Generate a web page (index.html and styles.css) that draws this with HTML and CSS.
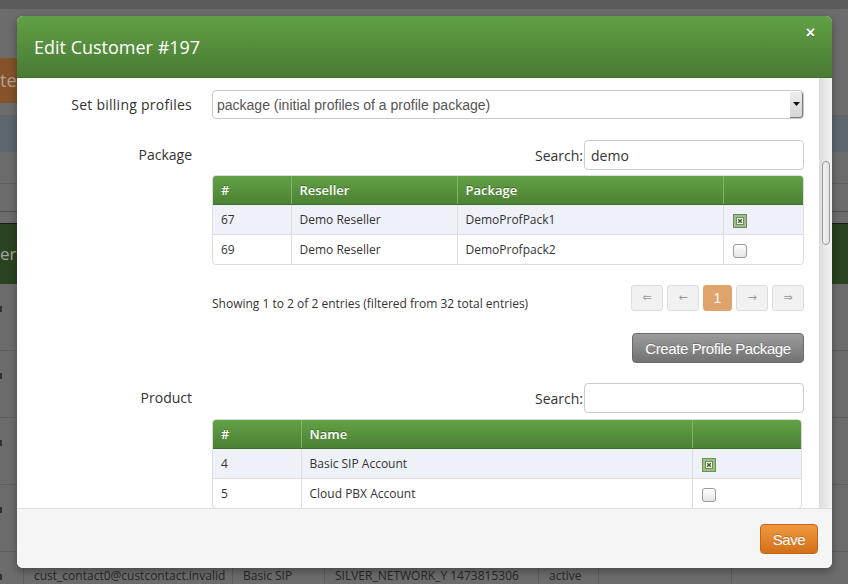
FILE: index.html
```html
<!DOCTYPE html>
<html lang="en">
<head>
    <meta charset="UTF-8">
    <meta name="viewport" content="width=device-width, initial-scale=1.0">
    <title>Edit Customer #197</title>
    <link rel="stylesheet" href="styles.css">
</head>
<body>
    <!-- page behind the backdrop -->
    <div class="page">
        <div class="page-top"></div>
        <div class="page-tools">
            <div class="page-btn">te</div>
        </div>
        <div class="page-strip"></div>
        <div class="page-line"></div>
        <div class="page-line dark"></div>
        <div class="page-thead">er</div>
        <div class="page-row"><span class="mark"></span></div>
        <div class="page-row"><span class="mark"></span></div>
        <div class="page-row"><span class="mark"></span></div>
        <div class="page-row"><span class="mark"></span></div>
        <div class="page-row">
            <div class="page-cell c0"><span class="mark"></span></div>
            <div class="page-cell c1">cust_contact0@custcontact.invalid</div>
            <div class="page-cell c2">Basic SIP</div>
            <div class="page-cell c3">SILVER_NETWORK_Y 1473815306</div>
            <div class="page-cell c4">active</div>
            <div class="page-cell c5"></div>
            <div class="page-cell c6"></div>
        </div>
    </div>

    <div class="modal">
        <div class="modal-header">
            <h3 class="modal-title">Edit Customer #197</h3>
            <span class="close">&times;</span>
        </div>

        <div class="modal-body">
            <div class="body-content">
                <div class="form-row">
                    <label class="form-label line-29 wide">Set billing profiles</label>
                    <div class="form-control">
                        <div class="select-box">
                            <span class="select-text">package (initial profiles of a profile package)</span>
                            <span class="select-arrow">
                                <svg width="7" height="4" viewBox="0 0 7 4"><path d="M0 0h7L3.5 4z" fill="#111"/></svg>
                            </span>
                        </div>
                    </div>
                </div>

                <div class="form-row group-gap">
                    <label class="form-label line-30">Package</label>
                    <div class="form-control">
                        <div class="search-line">
                            <span class="search-label">Search:</span>
                            <input class="search-input" type="text" value="demo">
                        </div>
                        <div class="table-wrap">
                            <table class="data-table">
                                <colgroup>
                                    <col style="width: 78px">
                                    <col style="width: 166px">
                                    <col style="width: 266px">
                                    <col>
                                </colgroup>
                                <thead>
                                    <tr><th>#</th><th>Reseller</th><th>Package</th><th></th></tr>
                                </thead>
                                <tbody>
                                    <tr class="odd">
                                        <td>67</td><td>Demo Reseller</td><td>DemoProfPack1</td>
                                        <td class="check-cell">
                                            <svg class="check" width="14" height="14" viewBox="0 0 14 14"><rect x="0.5" y="0.5" width="13" height="13" fill="#9cbf85" stroke="#222" stroke-dasharray="1 1"/><rect x="3.5" y="3.5" width="7" height="7" fill="#eef4ea" stroke="#6c8f58"/><path d="M5.2 5.2l3.6 3.6M8.8 5.2l-3.6 3.6" stroke="#3f5f30" stroke-width="1.4"/></svg>
                                        </td>
                                    </tr>
                                    <tr>
                                        <td>69</td><td>Demo Reseller</td><td>DemoProfpack2</td>
                                        <td class="check-cell">
                                            <svg class="check" width="14" height="14" viewBox="0 0 14 14"><defs><linearGradient id="cb1" x1="0" y1="0" x2="0" y2="1"><stop offset="0" stop-color="#fff"/><stop offset="1" stop-color="#e4e4e4"/></linearGradient></defs><rect x="0.5" y="0.5" width="13" height="13" rx="2.5" fill="url(#cb1)" stroke="#9a9a9a"/></svg>
                                        </td>
                                    </tr>
                                </tbody>
                            </table>
                        </div>
                        <div class="table-footer">
                            <div class="table-info">Showing 1 to 2 of 2 entries (filtered from 32 total entries)</div>
                            <div class="pager">
                                <span class="page-link">&lArr;</span>
                                <span class="page-link">&larr;</span>
                                <span class="page-link active">1</span>
                                <span class="page-link">&rarr;</span>
                                <span class="page-link">&rArr;</span>
                            </div>
                        </div>
                        <div class="button-line">
                            <button class="btn btn-gray">Create Profile Package</button>
                        </div>
                    </div>
                </div>

                <div class="form-row group-gap">
                    <label class="form-label line-30">Product</label>
                    <div class="form-control">
                        <div class="search-line">
                            <span class="search-label">Search:</span>
                            <input class="search-input" type="text" value="">
                        </div>
                        <div class="table-wrap narrow">
                            <table class="data-table">
                                <colgroup>
                                    <col style="width: 88px">
                                    <col style="width: 391px">
                                    <col>
                                </colgroup>
                                <thead>
                                    <tr><th>#</th><th>Name</th><th></th></tr>
                                </thead>
                                <tbody>
                                    <tr class="odd">
                                        <td>4</td><td>Basic SIP Account</td>
                                        <td class="check-cell">
                                            <svg class="check" width="14" height="14" viewBox="0 0 14 14"><rect x="0.5" y="0.5" width="13" height="13" fill="#9cbf85" stroke="#6c8f58"/><rect x="3.5" y="3.5" width="7" height="7" fill="#eef4ea" stroke="#6c8f58"/><path d="M5.2 5.2l3.6 3.6M8.8 5.2l-3.6 3.6" stroke="#3f5f30" stroke-width="1.4"/></svg>
                                        </td>
                                    </tr>
                                    <tr>
                                        <td>5</td><td>Cloud PBX Account</td>
                                        <td class="check-cell">
                                            <svg class="check" width="14" height="14" viewBox="0 0 14 14"><defs><linearGradient id="cb2" x1="0" y1="0" x2="0" y2="1"><stop offset="0" stop-color="#fff"/><stop offset="1" stop-color="#e4e4e4"/></linearGradient></defs><rect x="0.5" y="0.5" width="13" height="13" rx="2.5" fill="url(#cb2)" stroke="#9a9a9a"/></svg>
                                        </td>
                                    </tr>
                                </tbody>
                            </table>
                        </div>
                    </div>
                </div>
            </div>

            <div class="scrollbar">
                <div class="scroll-thumb"></div>
            </div>
        </div>

        <div class="modal-footer">
            <button class="btn btn-save">Save</button>
        </div>
    </div>
</body>
</html>
```

FILE: styles.css
```css
* {
    box-sizing: border-box;
}

body {
    margin: 0;
    width: 848px;
    height: 584px;
    overflow: hidden;
    position: relative;
    background: #6c6c6c;
    font-family: "Open Sans", "Liberation Sans", sans-serif;
    color: #333;
}

/* background page (already dimmed by the backdrop) */
.page {
    height: 584px;
    overflow: hidden;
}

.page-top {
    height: 9px;
    background: #5a5a5a;
}

.page-tools {
    height: 106px;
    padding-top: 49px;
}

.page-btn {
    width: 17px;
    height: 45px;
    background: #85522a;
    color: #b3a08f;
    font-size: 18px;
    line-height: 45px;
    overflow: hidden;
    white-space: nowrap;
}

.page-strip {
    height: 37px;
    background: #5c676e;
}

.page-line {
    height: 32px;
    border-bottom: 1px solid #5e5e5e;
}

.page-line.dark {
    height: 28px;
    border-bottom-color: #4d4d4d;
    margin-bottom: 11px;
}

.page-thead {
    height: 61px;
    background: #2b431f;
    border-top: 1px solid #1c1c1c;
    color: #a3ab9c;
    font-size: 17px;
    line-height: 60px;
}

.page-row {
    height: 67px;
    border-bottom: 1px solid #5f5f5f;
    display: flex;
    font-size: 12px;
    color: #262626;
    line-height: 18px;
}

.mark {
    display: block;
    width: 2px;
    height: 6px;
    margin-top: 22px;
    background: #303030;
}

.page-cell {
    height: 67px;
    padding: 15px 0 0 10px;
    border-left: 1px solid #5e5e5e;
    white-space: nowrap;
}

.page-cell.c0 { width: 23px; border-left: none; padding: 0; }
.page-cell.c1 { width: 209px; }
.page-cell.c2 { width: 92px; }
.page-cell.c3 { width: 214px; }
.page-cell.c4 { width: 60px; }
.page-cell.c5 { width: 133px; }
.page-cell.c6 { flex: 1; }

/* modal */
.modal {
    position: absolute;
    left: 17px;
    top: 16px;
    width: 815px;
    height: 552px;
    background: #fff;
    border-radius: 6px;
    box-shadow: 0 3px 9px rgba(0, 0, 0, 0.35);
    display: flex;
    flex-direction: column;
    overflow: hidden;
}

.modal-header {
    height: 62px;
    padding: 0 17px;
    display: flex;
    justify-content: space-between;
    align-items: flex-start;
    background: linear-gradient(to bottom, #60a045, #4a7a34);
    border-bottom: 1px solid #3f6a2c;
}

.modal-title {
    margin: 0;
    font-size: 18px;
    font-weight: normal;
    line-height: 62px;
    color: #fff;
}

.close {
    margin-top: 10px;
    font-family: "Liberation Sans", sans-serif;
    font-size: 16px;
    font-weight: bold;
    line-height: 14px;
    color: #fff;
    text-shadow: 0 1px 0 rgba(0, 0, 0, 0.3);
}

.modal-body {
    height: 430px;
    display: flex;
    overflow: hidden;
}

.body-content {
    flex: 1;
    padding: 12px 15px 0 0;
    overflow: hidden;
}

.form-row {
    display: grid;
    grid-template-columns: 175px 592px;
    column-gap: 20px;
}

.group-gap {
    margin-top: 21px;
}

.form-row.group-gap + .form-row.group-gap {
    margin-top: 20px;
}

.form-label {
    text-align: right;
    font-size: 14px;
    color: #333;
}

.form-label.wide {
    letter-spacing: 0.25px;
}

.line-29 { line-height: 29px; }
.line-30 { line-height: 30px; }

.select-box {
    height: 29px;
    border: 1px solid #c8c8c8;
    border-radius: 4px;
    display: flex;
    align-items: center;
    justify-content: space-between;
    padding: 0 0 0 4px;
    font-family: "Liberation Sans", sans-serif;
    font-size: 14px;
    color: #555;
}

.select-arrow {
    width: 13px;
    height: 26px;
    display: flex;
    align-items: center;
    justify-content: center;
    background: linear-gradient(to bottom, #ececec, #d6d6d6);
    border-right: 1px solid #7d7d7d;
    border-bottom: 1px solid #7d7d7d;
    border-radius: 0 3px 3px 0;
}

.search-line {
    display: flex;
    justify-content: flex-end;
    align-items: center;
}

.search-label {
    font-size: 14px;
    margin-right: 1px;
}

.search-input {
    width: 220px;
    height: 30px;
    margin: 0;
    border: 1px solid #ccc;
    border-radius: 4px;
    padding: 0 6px;
    font-family: "Open Sans", sans-serif;
    font-size: 14px;
    color: #333;
    outline: none;
}

.table-wrap {
    margin-top: 5px;
    border: 1px solid #ddd;
    border-radius: 4px;
    overflow: hidden;
}

.table-wrap.narrow {
    width: 590px;
    margin-top: 6px;
}

.data-table {
    width: 100%;
    border-collapse: collapse;
    table-layout: fixed;
    font-size: 12px;
}

.data-table th {
    height: 28px;
    padding: 0 8px;
    text-align: left;
    font-size: 13px;
    font-weight: 600;
    color: #fff;
    text-shadow: 0 -1px 0 rgba(0, 0, 0, 0.3);
    background: linear-gradient(to bottom, #62a146, #4c8134);
    border-left: 1px solid #7fb565;
    border-bottom: 1px solid #3f6d2b;
}

.data-table td {
    height: 30px;
    padding: 0 8px;
    border-left: 1px solid #ddd;
    border-top: 1px solid #ddd;
    color: #333;
}

.data-table th:first-child,
.data-table td:first-child {
    border-left: none;
}

.data-table tr.odd td {
    background: #eef1f7;
    border-top: none;
}

.check-cell {
    vertical-align: middle;
}

.check {
    display: block;
    margin-top: 4px;
    margin-left: 1px;
}

.table-footer {
    margin-top: 20px;
    display: flex;
    justify-content: space-between;
    align-items: flex-start;
}

.table-info {
    padding-top: 10px;
    font-size: 12px;
    line-height: 18px;
    color: #333;
}

.pager {
    display: flex;
    gap: 4px;
}

.page-link {
    width: 32px;
    height: 26px;
    line-height: 24px;
    text-align: center;
    background: #f1f1f1;
    border: 1px solid #dcdcdc;
    border-radius: 3px;
    font-family: "DejaVu Sans", sans-serif;
    font-size: 11px;
    color: #999;
}

.page-link.active {
    width: 29px;
    background: #dea46c;
    border-color: #dea46c;
    font-family: "Liberation Sans", sans-serif;
    font-size: 14px;
    color: #fff;
}

.button-line {
    margin-top: 20px;
    display: flex;
    justify-content: flex-end;
}

.btn {
    height: 30px;
    padding: 0 10px;
    border-radius: 4px;
    font-family: "Liberation Sans", sans-serif;
    font-size: 15px;
    letter-spacing: -0.4px;
    white-space: nowrap;
    color: #fff;
    text-shadow: 0 -1px 0 rgba(0, 0, 0, 0.2);
    cursor: pointer;
}

.btn-gray {
    width: 172px;
    background: linear-gradient(to bottom, #9c9c9c, #727272);
    border: 1px solid #6a6a6a;
}

.btn-save {
    width: 58px;
    padding: 0;
    background: linear-gradient(to bottom, #f0993f, #d3701a);
    border: 1px solid #c2651a;
}

.scrollbar {
    width: 13px;
    height: 430px;
    padding: 83px 0 0 3px;
    background: linear-gradient(to right, #dcdcdc, #f3f3f3);
}

.scroll-thumb {
    width: 8px;
    height: 84px;
    border: 1px solid #9a9a9a;
    border-radius: 4px;
    background: linear-gradient(to right, #f4f4f4, #e2e2e2);
}

.modal-footer {
    height: 60px;
    padding: 15px 14px 0 0;
    display: flex;
    justify-content: flex-end;
    align-items: flex-start;
    background: #f5f5f5;
    border-top: 1px solid #ddd;
}
```
